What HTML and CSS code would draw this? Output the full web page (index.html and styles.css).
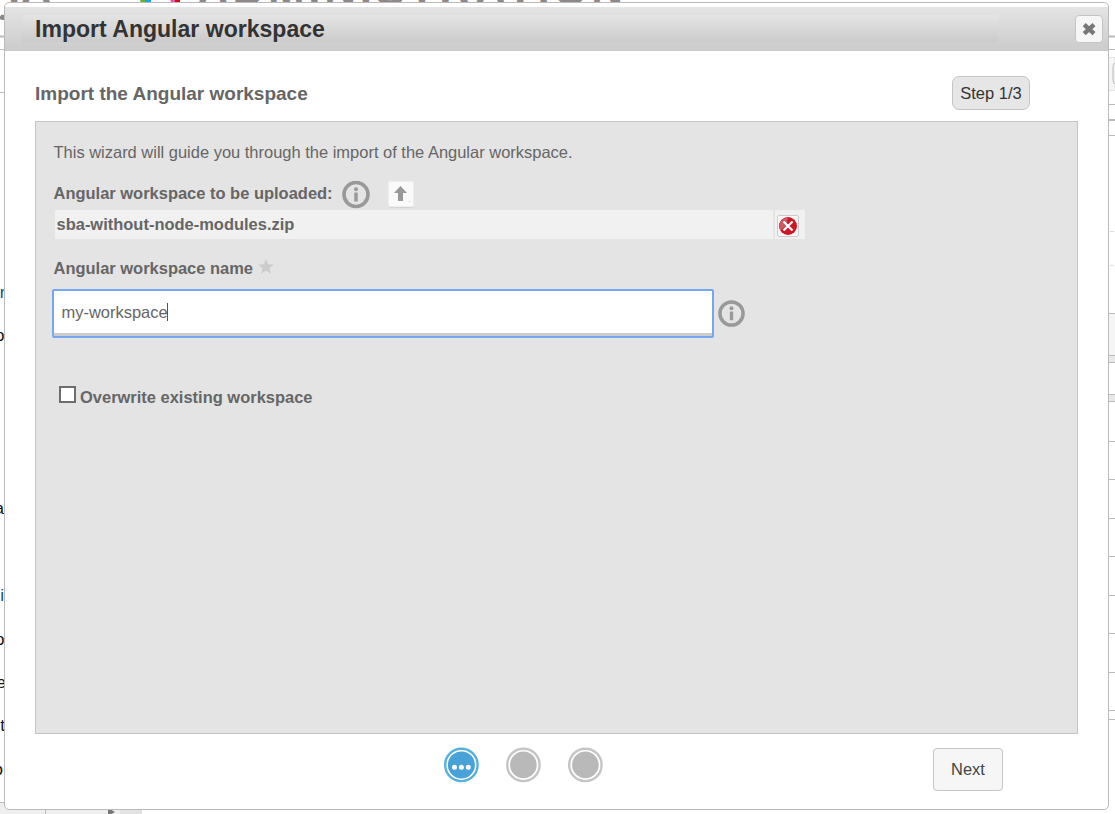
FILE: index.html
```html
<!DOCTYPE html>
<html lang="en">
<head>
<meta charset="utf-8">
<title>Import Angular workspace</title>
<link rel="stylesheet" href="styles.css">
</head>
<body>
<svg class="backdrop" width="1115" height="814" viewBox="0 0 1115 814" aria-hidden="true">
  <g class="brand">
    <text x="8" y="5">IA</text>
    <text x="197" y="5" textLength="426" lengthAdjust="spacing">ADMINISTRATION</text>
    <path d="M0 16.5Q2 18 6 17" fill="none" stroke="#8f8889" stroke-width="5"/>
    <path d="M140 0h10l-1 3h-8z" fill="#64b22d"/><path d="M146 0h5v3h-5z" fill="#18a5dc"/>
    <path d="M170 0h6v3h-4z" fill="#e85a9b"/><path d="M175 0h5v3h-5z" fill="#e2001a"/>
  </g>
  <g class="rules">
    <path d="M0 49.5H4M0 92.5H4M0 802.5H6M1108 49.5h7M1108 104.5h7M1108 135.5h7"/>
    <path d="M0 36.5H4M1108 36.5h7M1108 120h7" stroke-width="2"/>
    <path d="M1108 57.5h7v33h-7z" fill="#f6f6f6" stroke="#e4e4e4"/>
    <path d="M1117 62.5q-4 0-4 4v14q0 4 4 4" fill="#f0f0f0"/>
    <path d="M1110 231.500h4M1110 265.500h4" stroke="#ddd"/>
    <path d="M1108 313h7v42h-7z" fill="#f5f5f5" stroke="none"/>
    <path d="M1108 355h7v7h-7zM1108 394h7v7h-7z" fill="#e8e8e8" stroke="none"/>
    <path d="M1108 313.500h7M1108 355.500h7M1108 362.500h7M1108 394.500h7M1108 401.500h7M1108 441.500h7M1108 479.500h7M1108 518.500h7M1108 556.500h7M1108 595.500h7M1108 633.500h7M1108 672.500h7M1108 710.500h7M1108 719.500h7"/>
    <path d="M0 803h120v11H0z" fill="#eee" stroke="none"/>
    <path d="M120 803h22v11h-22z" fill="#e2e2e2" stroke="none"/>
    <path d="M45.500 803v11"/>
    <path d="M108 808l7 4-7 4z" fill="#777" stroke="none"/>
  </g>
  <g class="cells" text-anchor="end">
    <text x="5.500" y="298" class="link">r</text><text x="4.500" y="341">o</text>
    <text x="4" y="514">a</text><text x="4" y="601" class="link">i</text>
    <text x="4.500" y="645">o</text><text x="6" y="688">e</text><text x="5" y="731">t</text><text x="3" y="775">o</text>
  </g>
</svg>
<main class="dialog">
  <header class="titlebar">
    <h1 class="title">Import Angular workspace</h1>
    <button class="close" aria-label="Close"><svg width="16" height="16" viewBox="0 0 16 16"><path d="M3.200 3.600L13 12.600M13 3.600L3.200 12.600" stroke="#777" stroke-width="4.300"/></svg></button>
  </header>
  <div class="heading">
    <h2 class="subtitle">Import the Angular workspace</h2>
    <span class="step">Step 1/3</span>
  </div>
  <section class="panel">
    <p class="intro">This wizard will guide you through the import of the Angular workspace.</p>
    <div class="upload">
      <span class="label">Angular workspace to be uploaded:</span>
      <svg class="info" width="28" height="28" viewBox="0 0 28 28"><circle cx="14" cy="13.500" r="12" fill="none" stroke="#999" stroke-width="3.600"/><circle cx="14" cy="8.300" r="2" fill="#999"/><path d="M14 11.500v9" stroke="#999" stroke-width="3.400"/></svg>
      <button class="up" aria-label="Upload"><svg width="26" height="26" viewBox="0 0 26 26"><path d="M12.500 5L19 12h-4v8h-5v-8H6z" fill="#999"/><path d="M20.500 20.500h2" stroke="#ddd"/></svg></button>
    </div>
    <div class="file">
      <span class="filename">sba-without-node-modules.zip</span>
      <span class="remove"><svg width="22" height="22" viewBox="0 0 22 22"><rect x=".5" y=".5" width="21" height="21" rx="1.500" fill="#f8f8f8" stroke="#ccc"/><circle cx="11" cy="11" r="9" fill="#d01524"/><path d="M3.500 15.500A9 9 0 0 1 11 2.200L9 11z" fill="#cf5860"/><path d="M6.500 6.500l9 9M15.500 6.500l-9 9" stroke="#fff" stroke-width="2.300"/></svg></span>
    </div>
    <div class="name-label">
      <span class="label">Angular workspace name</span>
      <svg width="16" height="15" viewBox="0 0 16 15"><path d="M8 0l2.200 5.200 5.600.4-4.300 3.600 1.400 5.500L8 11.800l-4.900 2.900 1.400-5.500L.2 5.600l5.600-.4z" fill="#ccc"/></svg>
    </div>
    <div class="name-field">
      <div class="input"><span>my-workspace</span><i class="caret"></i></div>
      <svg class="info" width="27" height="27" viewBox="0 0 28 28"><circle cx="14" cy="14" r="12" fill="none" stroke="#999" stroke-width="3.600"/><circle cx="14" cy="8.500" r="2" fill="#999"/><path d="M14 12v9" stroke="#999" stroke-width="3.400"/></svg>
    </div>
    <div class="overwrite"><span class="checkbox" role="checkbox" aria-checked="false"></span><span class="label">Overwrite existing workspace</span></div>
  </section>
  <footer class="footer">
    <div class="dots">
      <svg width="36" height="36" viewBox="0 0 36 36"><circle cx="18.400" cy="17.900" r="16.200" fill="#fff" stroke="#57b0de" stroke-width="2.400"/><circle cx="18.400" cy="17.900" r="13.500" fill="#48a2d7"/><path d="M11.500 20.200h.01M18.400 20.200h.01M25.300 20.200h.01" stroke="#fff" stroke-width="5" stroke-linecap="round"/></svg>
      <svg width="36" height="36" viewBox="0 0 36 36"><circle cx="18.400" cy="17.900" r="16.200" fill="#fff" stroke="#c5c5c5" stroke-width="2.400"/><circle cx="18.400" cy="17.900" r="13.300" fill="#b9b9b9"/></svg>
      <svg width="36" height="36" viewBox="0 0 36 36"><circle cx="18.400" cy="17.900" r="16.200" fill="#fff" stroke="#c5c5c5" stroke-width="2.400"/><circle cx="18.400" cy="17.900" r="13.300" fill="#b9b9b9"/></svg>
    </div>
    <button class="next">Next</button>
  </footer>
</main>
</body>
</html>
```
FILE: styles.css
```css
* { box-sizing: border-box; }
body {
  margin: 0;
  padding: 2px 0 0 4px;
  width: 1115px;
  height: 814px;
  overflow: hidden;
  background: #fff;
  font: 16.480px "Liberation Sans", Arial, sans-serif;
  color: #666;
}
h1, h2, p { margin: 0; }
button { padding: 0; font: inherit; }
svg { display: block; flex: none; }
.backdrop { position: absolute; inset: 0; z-index: -1; }
.brand { font-size: 44px; font-weight: bold; fill: #8f8889; }
.rules { fill: none; stroke: #bbb; }
.cells { font-size: 17px; fill: #111; }
.cells .link { fill: #0b4f85; }
.dialog {
  display: flex;
  flex-direction: column;
  width: 1105px;
  height: 808px;
  padding-top: 4px;
  background: #fff;
  border: 1px solid #bbb;
  border-radius: 5px;
}
.titlebar {
  display: flex;
  align-items: flex-start;
  justify-content: space-between;
  height: 44px;
  padding: 8px 5px 0 17px;
  background: linear-gradient(#e4e4e4, #cbcbcb);
}
.title {
  width: 976px;
  height: 27px;
  padding-left: 13px;
  background: linear-gradient(#e4e4e4, #cbcbcb);
  font-size: 23.050px;
  line-height: 28px;
  color: #333;
}
.close {
  display: grid;
  place-items: center;
  width: 28px;
  height: 28px;
  background: #f6f6f6;
  border: 1px solid #c5c5c5;
  border-radius: 4px;
}
.heading {
  display: flex;
  align-items: center;
  justify-content: space-between;
  height: 34px;
  margin: 25px 78px 11px 30px;
}
.subtitle { padding-top: 1px; font-size: 19px; line-height: 34px; }
.step {
  width: 78px;
  height: 34px;
  border: 1px solid #c5c5c5;
  border-radius: 7px;
  background: #e6e6e6;
  color: #333;
  line-height: 33px;
  text-align: center;
}
.panel {
  width: 1043px;
  height: 613px;
  margin-left: 30px;
  padding: 20px 16px 0;
  background: #e4e4e4;
  border: 1px solid #c5c5c5;
}
.intro { height: 39px; padding-left: 1.500px; line-height: 21px; }
.label, .filename { font-weight: bold; }
.upload { display: flex; height: 28px; padding-left: 1.500px; line-height: 25px; }
.upload .label { width: 279.500px; white-space: nowrap; }
.upload .info { margin-left: 9px; }
.up {
  width: 26px;
  height: 26px;
  margin-left: 18px;
  border: 0;
  border-radius: 3px;
  background: #fafafa;
  box-shadow: inset 0 0 0 1px #eee, 0 1px 0 #d5d5d5;
}
.file { display: flex; gap: 2px; height: 29px; margin: 1px 0 0 3px; }
.filename { width: 718px; padding-left: 1.500px; background: #f1f1f1; line-height: 29px; }
.remove { width: 30px; padding: 5px 0 0 2px; background: #f1f1f1; }
.name-label { display: flex; gap: 5px; height: 50px; padding: 19px 0 0 1.500px; line-height: 21px; }
.name-label svg { margin-top: 1px; }
.name-field { display: flex; align-items: center; gap: 4px; height: 49px; }
.input {
  display: flex;
  align-items: center;
  width: 662px;
  height: 49px;
  padding: 0 0 3px 7.500px;
  background: #fff;
  border: 2px solid #76a6f2;
  border-radius: 2px;
  box-shadow: inset 0 -3px #ccc;
}
.caret { width: 1px; height: 18px; margin-left: -1px; background: #555; }
.overwrite { display: flex; gap: 4px; height: 22px; margin: 47px 0 0 7px; line-height: 25px; }
.checkbox { width: 17px; height: 17px; margin-top: 1px; border: 2px solid #6d6d6d; background: #fff; }
.footer { display: flex; justify-content: space-between; padding: 13px 105px 0 438px; }
.dots { display: flex; gap: 26px; }
.next {
  width: 70px;
  height: 43px;
  margin-top: 1px;
  background: #f6f6f6;
  border: 1px solid #c5c5c5;
  border-radius: 4px;
  color: #444;
}
```
